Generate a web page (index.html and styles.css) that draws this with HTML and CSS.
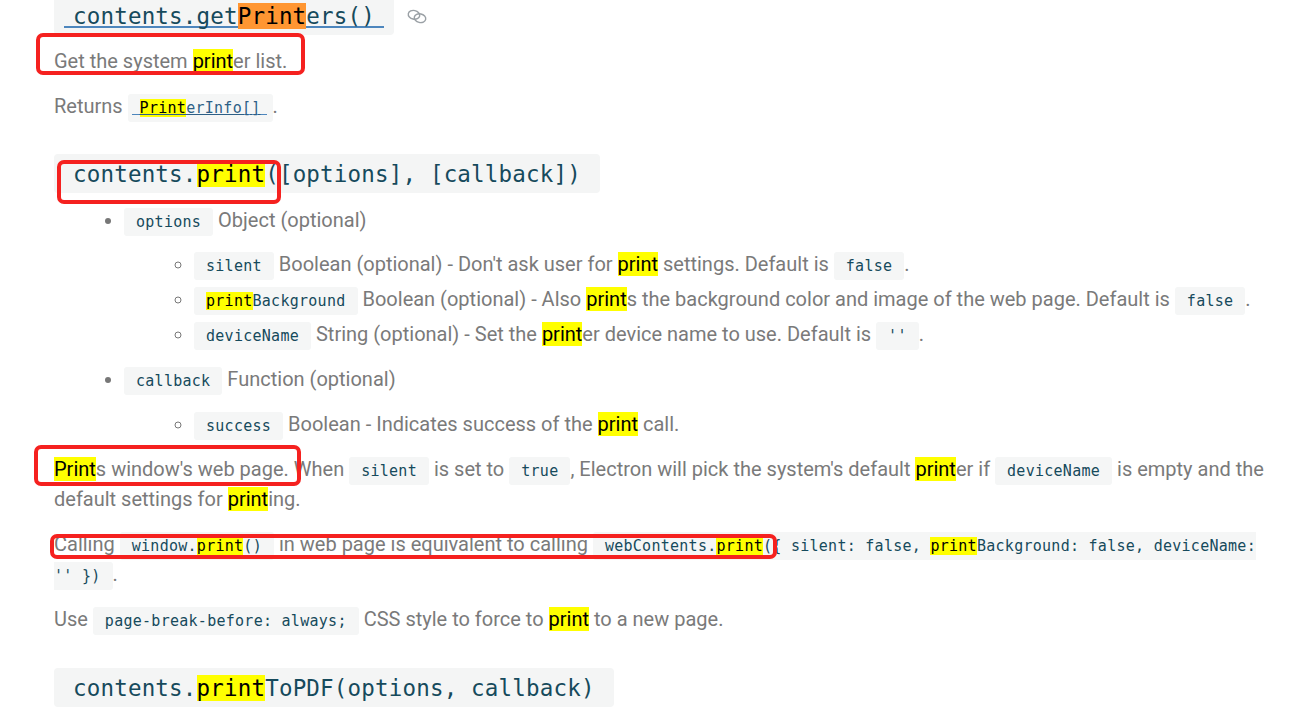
FILE: index.html
```html
<!DOCTYPE html>
<html lang="en">
<head>
<meta charset="utf-8">
<title>contents.print</title>
<link rel="stylesheet" href="styles.css">
</head>
<body>
<main class="doc">
  <h3 class="api first"><code><a href="#" class="hlink">contents.get<mark class="current">Print</mark>ers()</a></code>
    <svg class="chain" viewBox="0 0 20 15" width="20" height="15" aria-hidden="true"><g fill="none" stroke="#9aa0a5" stroke-width="1.400"><ellipse cx="7" cy="5.800" rx="5.800" ry="4.300" transform="rotate(12 7 5.800)"/><ellipse cx="13" cy="9.200" rx="5.800" ry="4.300" transform="rotate(12 13 9.200)"/></g></svg>
  </h3>
  <p>Get the system <mark>print</mark>er list.</p>
  <p class="returns">Returns <code class="slinkbox"><a href="#" class="slink"><mark>Print</mark>erInfo[]</a></code>.</p>

  <h3 class="api"><code>contents.<mark>print</mark>([options], [callback])</code></h3>
  <ul class="outer">
    <li><code>options</code> Object (optional)
      <ul class="inner">
        <li><code>silent</code> Boolean (optional) - Don't ask user for <mark>print</mark> settings. Default is <code>false</code>.</li>
        <li><code><mark>print</mark>Background</code> Boolean (optional) - Also <mark>print</mark>s the background color and image of the web page. Default is <code>false</code>.</li>
        <li><code>deviceName</code> String (optional) - Set the <mark>print</mark>er device name to use. Default is <code>''</code>.</li>
      </ul>
    </li>
    <li><code>callback</code> Function (optional)
      <ul class="inner">
        <li><code>success</code> Boolean - Indicates success of the <mark>print</mark> call.</li>
      </ul>
    </li>
  </ul>
  <p><mark>Print</mark>s window's web page. When <code>silent</code> is set to <code>true</code>, Electron will pick the system's default <mark>print</mark>er if <code>deviceName</code> is empty and the default settings for <mark>print</mark>ing.</p>
  <p>Calling <code>window.<mark>print</mark>()</code> in web page is equivalent to calling <code>webContents.<mark>print</mark>({ silent: false, <mark>print</mark>Background: false, deviceName: '' })</code>.</p>
  <p>Use <code>page-break-before: always;</code> CSS style to force to <mark>print</mark> to a new page.</p>

  <h3 class="api last"><code>contents.<mark>print</mark>ToPDF(options, callback)</code></h3>
</main>
<div class="note note-a"></div>
<div class="note note-b"></div>
<div class="note note-c"></div>
<div class="note note-d"></div>
</body>
</html>
```

FILE: styles.css
```css
html, body {
  margin: 0;
  padding: 0;
  height: 711px;
  overflow: hidden;
  background: #fff;
}

body {
  position: relative;
  font-family: Roboto, "Liberation Sans", sans-serif;
  font-size: 20px;
  line-height: 30px;
  color: #7a7a7a;
}

.doc {
  width: 1210px;
  margin-top: -4px;
  padding-left: 54px;
}

p {
  margin: 0 0 15px;
}

mark {
  background: #ffff00;
  color: #000;
}

mark.current {
  background: #ff9632;
}

code {
  font-family: "DejaVu Sans Mono", "Liberation Mono", monospace;
  font-size: 15px;
  letter-spacing: 0.27px;
  line-height: 1;
  color: #164a5c;
  background: #f5f6f6;
  border-radius: 3px;
  padding: 5px 12px;
}

.api {
  margin: 0;
  font-weight: 400;
  height: 39px;
  display: flex;
  align-items: center;
  gap: 13px;
}

.first {
  margin-bottom: 11px;
}

.api code {
  display: block;
  font-size: 22.500px;
  letter-spacing: 0.180px;
  line-height: 37px;
  padding: 2px 19px 0;
  background: #f4f5f5;
  border-radius: 4px;
}

.first code {
  padding: 2px 10px 0;
}

.hlink {
  display: inline-block;
  padding: 0 9px;
  color: inherit;
  text-decoration: none;
  background: linear-gradient(#4d86bd, #4d86bd) 0 28px / 100% 2px no-repeat;
}

.slinkbox {
  padding-left: 4px;
  padding-right: 6px;
}

.slink {
  color: #2d5f86;
  text-decoration: underline;
  padding: 0 6px 0 8px;
  background: linear-gradient(#4d86bd, #4d86bd) 0 15px / 100% 1px no-repeat;
}

.chain {
  margin-top: 2px;
}

.returns {
  margin-bottom: 33px;
}

ul {
  margin: 0;
  padding: 0;
}

.outer {
  padding-left: 70px;
  margin-top: 12px;
  margin-bottom: 15px;
  list-style: disc;
}

.outer > li {
  margin-bottom: 15px;
}

.outer > li:last-child {
  margin-bottom: 0;
}

.inner {
  list-style: circle;
  padding-left: 70px;
  margin-top: 14px;
}

.outer > li:last-child .inner {
  margin-top: 15px;
}

.inner > li {
  margin-bottom: 5px;
}

.inner > li:last-child {
  margin-bottom: 0;
}

li::marker {
  color: #777;
}

.last {
  margin-top: 34px;
}

.note {
  position: absolute;
  box-sizing: border-box;
  border: 4px solid #f5211f;
  border-radius: 7px;
}

.note-a {
  left: 36px;
  top: 33px;
  width: 269px;
  height: 42px;
}

.note-b {
  left: 57px;
  top: 160px;
  width: 224px;
  height: 44px;
}

.note-c {
  left: 34px;
  top: 445px;
  width: 267px;
  height: 41px;
}

.note-d {
  left: 50px;
  top: 534px;
  width: 727px;
  height: 25px;
}
```
